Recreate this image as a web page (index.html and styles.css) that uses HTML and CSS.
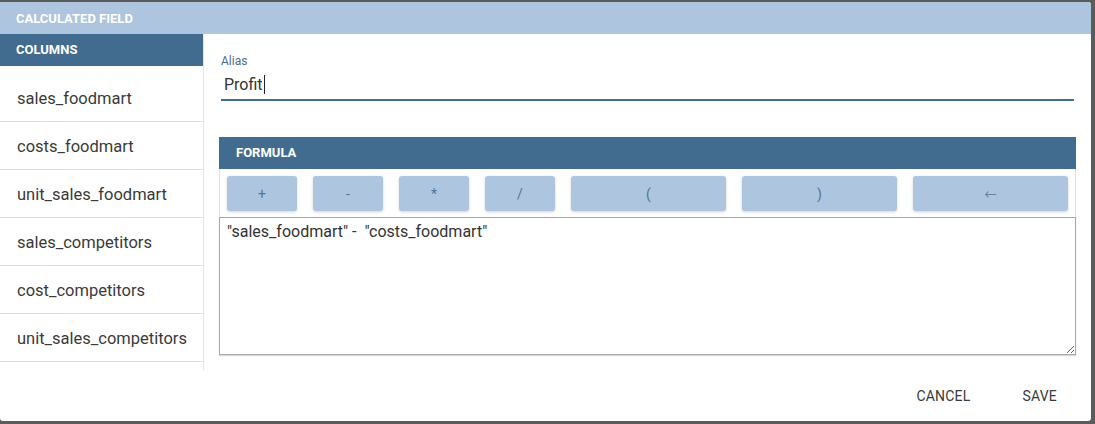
FILE: index.html
```html
<!DOCTYPE html>
<html>
<head>
<meta charset="utf-8">
<link rel="stylesheet" href="styles.css">
</head>
<body>
<div class="dialog">
  <div class="dlg-title">CALCULATED FIELD</div>
  <div class="dlg-body">
    <aside class="sidebar">
      <div class="side-head">COLUMNS</div>
      <ul class="col-list">
        <li>sales_foodmart</li>
        <li>costs_foodmart</li>
        <li>unit_sales_foodmart</li>
        <li>sales_competitors</li>
        <li>cost_competitors</li>
        <li>unit_sales_competitors</li>
      </ul>
    </aside>
    <main class="main">
      <div class="field">
        <label class="field-label">Alias</label>
        <div class="field-input">Profit<span class="caret"></span></div>
      </div>
      <section class="formula">
        <div class="formula-head">FORMULA</div>
        <div class="ops">
          <button class="op small">+</button>
          <button class="op small">-</button>
          <button class="op small">*</button>
          <button class="op small">/</button>
          <button class="op wide">(</button>
          <button class="op wide">)</button>
          <button class="op wide"><span class="arrow">←</span></button>
        </div>
        <textarea class="formula-text">"sales_foodmart" -  "costs_foodmart"</textarea>
      </section>
    </main>
  </div>
  <div class="dlg-actions">
    <button class="act">CANCEL</button>
    <button class="act">SAVE</button>
  </div>
</div>
</body>
</html>
```

FILE: styles.css
```css
html, body {
  margin: 0;
  padding: 0;
}
body {
  background: #5b5b5b;
  width: 1095px;
  height: 424px;
  overflow: hidden;
  font-family: Roboto, "Liberation Sans", sans-serif;
  color: #333;
}
.dialog {
  margin-top: 2px;
  width: 1091px;
  height: 419px;
  background: #fff;
  border-radius: 0 3px 3px 3px;
  display: flex;
  flex-direction: column;
  overflow: hidden;
}
.dlg-title {
  height: 32px;
  line-height: 33px;
  background: #adc5de;
  color: #fff;
  font-weight: 700;
  font-size: 13px;
  padding-left: 16px;
}
.dlg-body {
  display: flex;
  height: 336px;
}
.sidebar {
  width: 203px;
  border-right: 1px solid #e6e6e6;
  box-sizing: content-box;
}
.side-head {
  height: 32px;
  line-height: 32px;
  background: #426c8f;
  color: #fff;
  font-weight: 700;
  font-size: 13px;
  padding-left: 16px;
}
.col-list {
  list-style: none;
  margin: 0;
  padding: 8px 0 0 0;
}
.col-list li {
  height: 47px;
  line-height: 49px;
  border-bottom: 1px solid #e2e2e2;
  padding-left: 17px;
  font-size: 16.5px;
  color: #3a3a3a;
}
.main {
  flex: 1;
  padding: 20px 15px 0 15px;
  display: flex;
  flex-direction: column;
}
.field {
  padding: 0 2px;
  display: flex;
  flex-direction: column;
}
.field-label {
  font-size: 12px;
  line-height: 14px;
  color: #4d6d8c;
}
.field-input {
  height: 31px;
  line-height: 33px;
  font-size: 16px;
  color: #333;
  padding-left: 3px;
  border-bottom: 2px solid #426c8f;
}
.caret {
  display: inline-block;
  width: 1px;
  height: 19px;
  background: #222;
  vertical-align: -4px;
  margin-left: 1px;
}
.formula {
  margin-top: 36px;
  display: flex;
  flex-direction: column;
}
.formula-head {
  height: 32px;
  line-height: 32px;
  background: #426c8f;
  color: #fff;
  font-weight: 700;
  font-size: 13px;
  padding-left: 17px;
}
.ops {
  display: flex;
  gap: 16px;
  padding: 7px 7px 6px 7px;
  border-left: 1px solid #e2e2e2;
  border-right: 1px solid #e2e2e2;
}
.op {
  height: 35px;
  border: none;
  border-radius: 3px;
  background: #adc5de;
  color: #567592;
  font-family: Roboto, "Liberation Sans", sans-serif;
  font-size: 14px;
  box-shadow: 0 1px 3px rgba(0, 0, 0, 0.18);
  padding: 0;
}
.op.small {
  flex: 0 0 70px;
}
.op.wide {
  flex: 1 1 0;
}
.arrow {
  font-family: "DejaVu Sans", sans-serif;
  font-size: 15px;
  font-weight: 300;
}
.formula-text {
  display: block;
  box-sizing: border-box;
  width: 100%;
  height: 138px;
  margin: 0;
  border: 1px solid #a8a8a8;
  box-shadow: 0 1px 1px rgba(0, 0, 0, 0.15);
  padding: 5px 7px;
  font-family: Roboto, "Liberation Sans", sans-serif;
  font-size: 16px;
  line-height: 18px;
  color: #333;
  resize: both;
  outline: none;
}
.dlg-actions {
  flex: 1;
  display: flex;
  justify-content: flex-end;
  align-items: center;
  padding-right: 16px;
}
.act {
  background: none;
  border: none;
  font-family: Roboto, "Liberation Sans", sans-serif;
  font-size: 14px;
  color: #3a3a3a;
  padding: 8px 18px;
  letter-spacing: 0.2px;
}
.act + .act {
  margin-left: 16px;
}
```
